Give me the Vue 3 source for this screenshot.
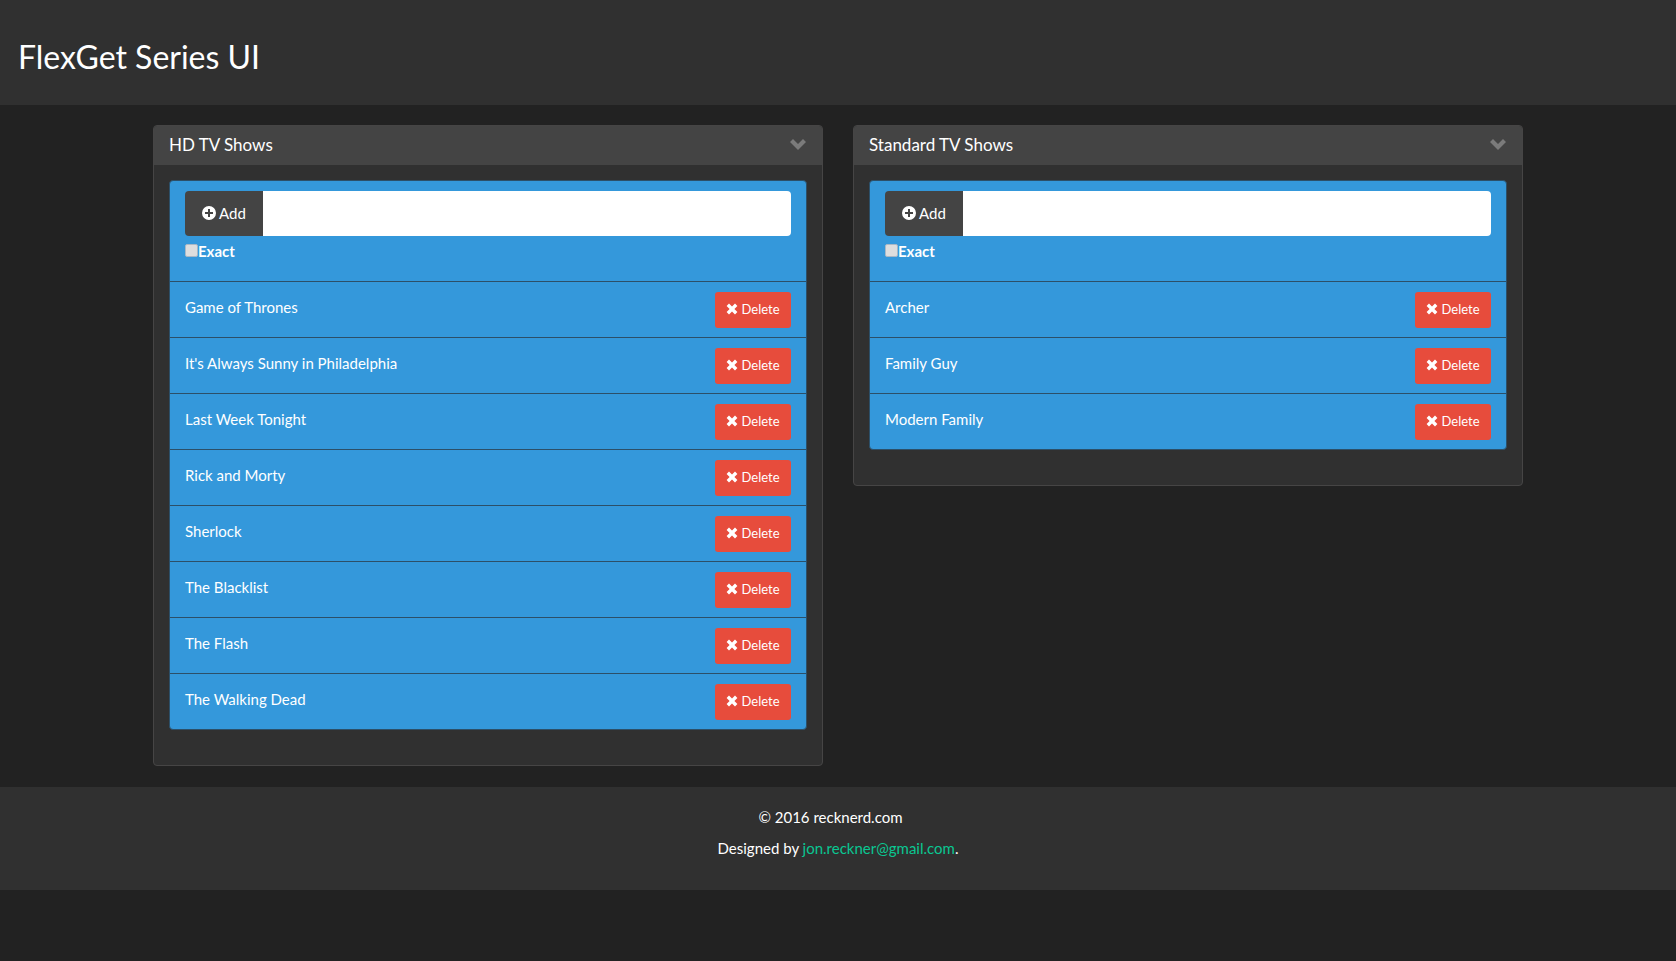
<template>
  <div class="page">
    <header class="top">
      <h1>FlexGet Series UI</h1>
    </header>

    <main class="columns">
      <section v-for="panel in panels" :key="panel.title" class="panel">
        <div class="panel-head">
          <h3>{{ panel.title }}</h3>
          <svg class="chevron" viewBox="0 0 16 11" width="16" height="11">
            <path d="M0 3 L3 0 L8 5 L13 0 L16 3 L8 11 Z" fill="#7b7b7b" />
          </svg>
        </div>
        <div class="panel-body">
          <ul class="list">
            <li class="add-row">
              <div class="input-group">
                <button class="add-btn">
                  <svg class="plus" viewBox="0 0 14 14" width="14" height="14">
                    <path fill-rule="evenodd" fill="#fff" d="M7 0a7 7 0 1 1 0 14A7 7 0 0 1 7 0ZM6 3v3H3v2h3v3h2V8h3V6H8V3Z" />
                  </svg>
                  Add
                </button>
                <input class="add-input" type="text" />
              </div>
              <label class="exact"><input type="checkbox" />Exact</label>
            </li>
            <li v-for="show in panel.shows" :key="show" class="show">
              <span class="name">{{ show }}</span>
              <button class="del-btn">
                <svg class="cross" viewBox="0 0 12 12" width="12" height="12">
                  <path fill="#fff" d="M3 .6 6 3.6 9 .6 11.4 3 8.4 6 11.4 9 9 11.4 6 8.4 3 11.4 .6 9 3.6 6 .6 3Z" />
                </svg>
                Delete
              </button>
            </li>
          </ul>
        </div>
      </section>
    </main>

    <footer class="bottom">
      <p class="copy">© 2016 recknerd.com</p>
      <p>Designed by <a href="#">jon.reckner@gmail.com</a>.</p>
    </footer>
  </div>
</template>

<script setup>
const panels = [
  {
    title: 'HD TV Shows',
    shows: [
      'Game of Thrones',
      "It's Always Sunny in Philadelphia",
      'Last Week Tonight',
      'Rick and Morty',
      'Sherlock',
      'The Blacklist',
      'The Flash',
      'The Walking Dead',
    ],
  },
  {
    title: 'Standard TV Shows',
    shows: ['Archer', 'Family Guy', 'Modern Family'],
  },
]
</script>

<style>
html, body { margin: 0; background: #222; }
</style>

<style scoped>
.page {
  min-height: 961px;
  background: #222;
  color: #fff;
  font-family: Lato, "Liberation Sans", sans-serif;
  font-size: 15px;
  line-height: 21px;
}
.top {
  height: 105px;
  background: #303030;
  padding: 0 18px;
  box-sizing: border-box;
  display: flex;
  align-items: center;
}
.top h1 { margin: 8px 0 0; font-size: 32px; font-weight: 400; line-height: 1.1; }

.columns {
  display: flex;
  align-items: flex-start;
  justify-content: center;
  gap: 30px;
  padding: 20px 0 21px;
}
.panel {
  width: 670px;
  box-sizing: border-box;
  background: #303030;
  border: 1px solid #464545;
  border-radius: 4px;
  padding-bottom: 35px;
  overflow: hidden;
}
.panel-head {
  height: 40px;
  margin: -1px -1px 0;
  background: #444;
  padding: 0 17px 0 16px;
  display: flex;
  align-items: center;
  justify-content: space-between;
}
.panel-head h3 { margin: 0; font-size: 17px; font-weight: 400; line-height: 1.1; }
.chevron { margin-bottom: 1px; }
.panel-body { padding: 15px 15px 0; }

.list {
  list-style: none;
  margin: 0;
  padding: 0;
  border: 1px solid #2c4f68;
  border-radius: 4px;
  overflow: hidden;
  background: #3498db;
}
.add-row { height: 100px; padding: 10px 15px 0; box-sizing: border-box; }
.input-group { display: flex; height: 45px; }
.add-btn {
  width: 78px;
  border: 0;
  padding: 0 0 1px;
  background: #444;
  color: #fff;
  font: inherit;
  border-radius: 4px 0 0 4px;
  display: flex;
  align-items: center;
  justify-content: center;
  gap: 3px;
}
.add-input { flex: 1; min-width: 0; border: 0; padding: 0; background: #fff; border-radius: 0 4px 4px 0; outline: 0; }
.exact { display: flex; align-items: flex-start; margin-top: 5px; font-weight: 700; height: 21px; line-height: 21px; }
.exact input {
  appearance: none;
  width: 13px;
  height: 13px;
  box-sizing: border-box;
  margin: 3px 0 0;
  background: #dedede;
  border: 1px solid #a9b8c6;
  border-radius: 2px;
}
.show {
  height: 56px;
  box-sizing: border-box;
  border-top: 1px solid #2c4f68;
  padding: 10px 15px;
  display: flex;
  justify-content: space-between;
  align-items: flex-start;
}
.name { margin-top: 5px; }
.del-btn {
  width: 76px;
  height: 36px;
  border: 0;
  padding: 0 0 2px;
  border-radius: 3px;
  background: #e74c3c;
  color: #fff;
  font: inherit;
  font-size: 13px;
  display: flex;
  align-items: center;
  justify-content: center;
  gap: 3px;
}

.bottom {
  height: 103px;
  box-sizing: border-box;
  background: #303030;
  padding-top: 20px;
  text-align: center;
}
.bottom p { margin: 0 0 10px; line-height: 21px; }
.bottom .copy { padding-right: 15px; }
.bottom a { color: #0ac792; text-decoration: none; }
</style>
